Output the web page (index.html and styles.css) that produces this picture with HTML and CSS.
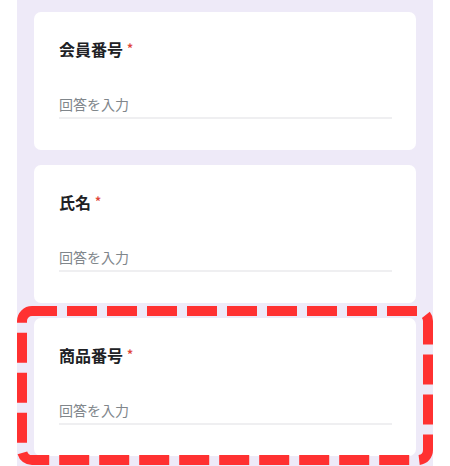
FILE: index.html
```html
<!DOCTYPE html>
<html lang="ja">
<head>
<meta charset="utf-8">
<link rel="stylesheet" href="styles.css">
</head>
<body>
<main class="form">
  <section class="card">
    <div class="label">会員番号<span class="req">*</span></div>
    <div class="answer">回答を入力</div>
  </section>
  <section class="card">
    <div class="label">氏名<span class="req">*</span></div>
    <div class="answer">回答を入力</div>
  </section>
  <section class="card highlight">
    <div class="label">商品番号<span class="req">*</span></div>
    <div class="answer">回答を入力</div>
    <svg class="marker" viewBox="0 0 416 159" aria-hidden="true">
      <rect x="5" y="5" width="406" height="149" rx="10" ry="10" fill="none" stroke="#ff3131" stroke-width="10" stroke-dasharray="30 10" stroke-dashoffset="5"/>
    </svg>
  </section>
</main>
</body>
</html>
```
FILE: styles.css
```css
html, body {
  margin: 0;
  padding: 0;
  background: #ffffff;
  height: 466px;
  overflow: hidden;
}
body {
  font-family: "Noto Sans CJK JP", "Noto Sans", sans-serif;
}
.form {
  margin-left: 17px;
  width: 416px;
  height: 466px;
  box-sizing: border-box;
  background: #eeeaf8;
  padding: 12px 17px 0;
  display: flex;
  flex-direction: column;
  gap: 15px;
}
.card {
  background: #ffffff;
  border-radius: 7px;
  height: 138px;
  box-sizing: border-box;
  padding: 24px 24px 0 25px;
  flex: none;
}
.label {
  font-size: 16px;
  line-height: 24px;
  font-weight: 700;
  color: #202124;
}
.req {
  color: #e0453a;
  font-size: 12px;
  margin-left: 4px;
  vertical-align: 3px;
}
.answer {
  margin-top: 33px;
  font-size: 14px;
  line-height: 20px;
  color: #80868b;
  padding-bottom: 3px;
  border-bottom: 2px solid #efeff1;
}
.highlight {
  position: relative;
}
.marker {
  position: absolute;
  left: -17px;
  top: -12px;
  width: 416px;
  height: 159px;
  overflow: visible;
}
```
